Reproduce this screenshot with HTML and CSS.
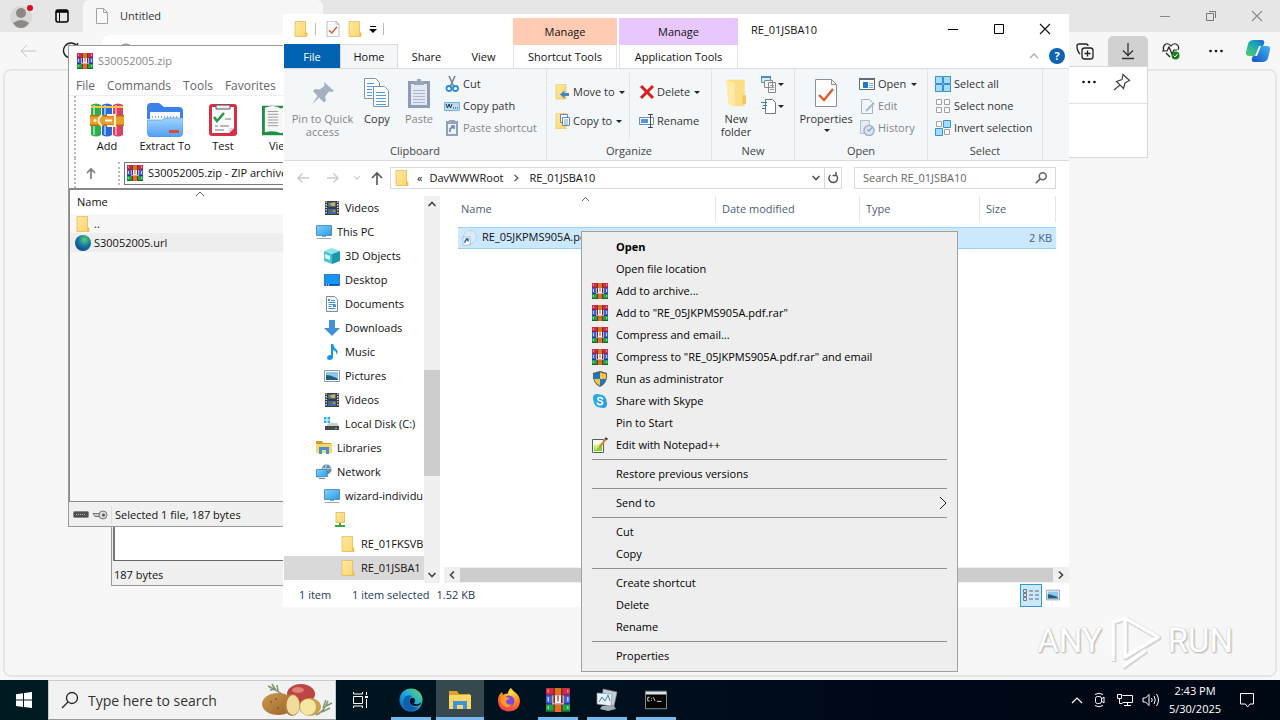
FILE: index.html
```html
<!DOCTYPE html>
<html lang="en">
<head>
<meta charset="utf-8">
<title>Desktop</title>
<link rel="stylesheet" href="styles.css">
</head>
<body>
<svg class="sprite" aria-hidden="true">
  <defs>
    <linearGradient id="gFolder" x1="0" y1="0" x2="1" y2="1"><stop offset="0" stop-color="#ffe9a0"/><stop offset="1" stop-color="#fbd56c"/></linearGradient>
    <linearGradient id="gScreen" x1="0" y1="0" x2="1" y2="1"><stop offset="0" stop-color="#7fd4fb"/><stop offset="1" stop-color="#2a9be8"/></linearGradient>
    <linearGradient id="gEdge" x1="0" y1="1" x2="1" y2="0"><stop offset="0" stop-color="#0c59a4"/><stop offset=".5" stop-color="#1ba7e0"/><stop offset="1" stop-color="#66dc5c"/></linearGradient>
    <radialGradient id="gFox" cx=".6" cy=".2" r=".9"><stop offset="0" stop-color="#ffe14a"/><stop offset=".5" stop-color="#ff8a1e"/><stop offset="1" stop-color="#f0255c"/></radialGradient>
    <radialGradient id="gGlobe" cx=".6" cy=".3" r=".8"><stop offset="0" stop-color="#5fd06a"/><stop offset=".5" stop-color="#1277a8"/><stop offset="1" stop-color="#0b3f80"/></radialGradient>
    <linearGradient id="gCop1" x1="0" y1="1" x2="1" y2="0"><stop offset="0" stop-color="#5ccf6a"/><stop offset=".6" stop-color="#1aa5b8"/><stop offset="1" stop-color="#1a66d8"/></linearGradient>
    <linearGradient id="gCop2" x1="0" y1="1" x2="1" y2="0"><stop offset="0" stop-color="#1450c8"/><stop offset="1" stop-color="#41b6f5"/></linearGradient>
    <linearGradient id="gBlueFolder" x1="0" y1="0" x2="0" y2="1"><stop offset="0" stop-color="#a3d4fc"/><stop offset="1" stop-color="#4e9ff2"/></linearGradient>
    <linearGradient id="gPotato" x1="0" y1="0" x2="1" y2="1"><stop offset="0" stop-color="#cf9a52"/><stop offset="1" stop-color="#96602a"/></linearGradient>
  </defs>
  <symbol id="folder" viewBox="0 0 16 16"><path d="M2 .5h10.500v11l1.500.5v3.500H2z" fill="url(#gFolder)" stroke="#e3b54a" stroke-width=".7"/><path d="M12 11.500l2 .5v3.500h-2z" fill="#f2c04c"/></symbol>
  <symbol id="rar" viewBox="0 0 16 16"><path fill="#cf2a48" d="M0 0h16v5H0z"/><path fill="#8f2458" d="M0 4h16v1H0z"/><path fill="#3c5ed8" d="M0 5h16v6H0z"/><path fill="#26379a" d="M0 10h16v1H0z"/><path fill="#1fa049" d="M0 11h16v5H0z"/><path fill="#0d6a2e" d="M0 15h16v1H0z"/><path fill="#f08a98" d="M1 1h1v2H1zM14 1h1v2h-1z"/><path fill="#c3cdfa" d="M1 6h1v3H1zM14 6h1v3h-1z"/><path fill="#7fdc8e" d="M1 12h1v2H1zM14 12h1v2h-1z"/><path fill="#dd6f28" d="M6 0h4v16H6z"/><path fill="#7b3410" d="M5 0h1v16H5zM10 0h1v16h-1z"/><path fill="#c9a9a0" d="M4 5h8v6H4z"/><path fill="#7c2c2c" d="M5 5h1v5H5zM10 5h1v5h-1z"/><path fill="#fff" d="M6 5h4v5H6z"/><path fill="#d04040" d="M7.500 5h1v4h-1z"/></symbol>
  <symbol id="books" viewBox="0 0 34 34"><path fill="#2fae4b" d="M1 2q5-3 10 0v30q-5 3-10 0z"/><path fill="#2b68d8" d="M12 2q5-3 10 0v30q-5 3-10 0z"/><path fill="#de3f68" d="M23 2q5-3 10 0v30q-5 3-10 0z"/><path fill="#8ce09b" d="M3 2h2v30H3z"/><path fill="#8db8ff" d="M14 2h2v30h-2z"/><path fill="#ff9db8" d="M25 2h2v30h-2z"/><path fill="#f6c83e" d="M1 3h32v2H1z"/><path fill="#eaa02a" d="M0 12h34v11H0z"/><path fill="#ba6c14" d="M0 12h34v1.500H0zM0 21.500h34V23H0z"/><path fill="none" stroke="#fff2cc" stroke-width="2" d="M12 12q-7 5.500 0 11M17 12h8v11h-8"/><path stroke="#fff" stroke-width="2" d="M15 17.500h7"/><circle cx="5" cy="17.500" r="1.500" fill="#fff2c0"/></symbol>
  <symbol id="extract" viewBox="0 0 36 34"><path fill="#3b82e8" d="M0 4q0-4 4-4h8l5 4h15q4 0 4 4v8H0z"/><path fill="#f5f9ff" d="M3 9h30v12H3z"/><path stroke="#9ab" stroke-width="2" d="M5 14h26" stroke-dasharray="1 2"/><path fill="url(#gBlueFolder)" stroke="#4992e6" stroke-width=".6" d="M0 17h15l4-2h17v14q0 5-5 5H5q-5 0-5-5z"/><path stroke="#e2483a" stroke-width="3" d="M22 28.500h10"/></symbol>
  <symbol id="test" viewBox="0 0 30 34"><rect x="1" y="1" width="28" height="32" rx="3" fill="#d92f45"/><path fill="#fbfbfb" d="M4 4h22v21l-5 5H4z"/><path fill="#ddd" d="M21 30v-5h5z"/><path fill="#eee" stroke="#555" d="M8 2h14v4H8z"/><path fill="none" stroke="#239a45" stroke-width="2.500" d="M6 14l3 4 7-8"/><path stroke="#777" d="M17 16h6M7 23h3M12 23h9M7 27h9" stroke-width="1.200"/></symbol>
  <symbol id="view" viewBox="0 0 40 34"><path fill="#1f8f45" d="M0 2h40v31H0z"/><path fill="#f7f7f7" d="M3 4q10-4 17 1v26q-8-4-17-1zM37 4q-10-4-17 1v26q8-4 17-1z"/><path stroke="#999" d="M6 8h11M6 11h11M6 14h11M6 17h11M6 20h11M6 23h11M23 8h11M23 11h11M23 14h11M23 17h11"/></symbol>
  <symbol id="page" viewBox="0 0 12 16"><path fill="#fafafa" stroke="#999" stroke-width=".9" d="M.5.500h7l4 4v11H.5zM7.500.500v4h4"/></symbol>
  <symbol id="doccheck" viewBox="0 0 22 28"><path fill="#fdfdfd" stroke="#8a9099" d="M.5.500h16l5 5v22H.5zM16.500.500v5h5"/><path fill="none" stroke="#df5a2c" stroke-width="2.400" d="M4 16l5 5 9-11"/></symbol>
  <symbol id="pin" viewBox="0 0 24 24"><path fill="#a3b0c2" d="M13 1l10 9-2 1-3-.5-4 5 1 4-2 2-5-5-7 7 5.500-8.500L2 10l2-2 4.500.500L13.500 5z"/></symbol>
  <symbol id="copyfile" viewBox="0 0 26 30"><g fill="#fff" stroke="#7d94b0"><path d="M.5.500h11l4 4v16H.5z"/><path d="M9.500 8.500h11l4 4v16h-15z"/></g><path stroke="#5699dc" stroke-width="1" d="M3 5.500h7M3 8.500h9M3 11.500h5M3 14.500h5M3 17.500h5M12 14.500h9M12 17.500h10M12 20.500h10M12 23.500h10M12 26.500h10"/></symbol>
  <symbol id="paste" viewBox="0 0 22 30"><path fill="#8d9db5" d="M0 3h22v27H0z"/><path fill="#e3e9f3" d="M3 6h16v21H3z"/><path fill="#98a5b8" d="M6 3h3V1h4v2h3v4H6z"/><path stroke="#a9b8d0" d="M5 12.500h12M5 15.500h12M5 18.500h12M5 21.500h12M5 24.500h12"/></symbol>
  <symbol id="cut" viewBox="0 0 16 16"><path stroke="#7b8794" stroke-width="1.600" d="M5 0l5 11M11 0L6 11" fill="none"/><g fill="none" stroke="#2f8bd0" stroke-width="1.800"><circle cx="5" cy="12.500" r="2.500"/><circle cx="11.500" cy="12.500" r="2.500"/></g></symbol>
  <symbol id="copypath" viewBox="0 0 16 16"><path fill="#b9dcf5" stroke="#79b3e0" d="M.5 4.500h15v8H.5z"/><path fill="none" stroke="#234" d="M2 6l1.500 4L5 6l1.500 4L8 6"/><path stroke="#234" stroke-dasharray="1 1" d="M9 10h5"/></symbol>
  <symbol id="pasteshort" viewBox="0 0 16 16"><path fill="#8fa1bb" d="M2 1h12v15H2z"/><path fill="#edf2f9" d="M4 4h8v10H4z"/><path fill="#98a5b8" d="M5 0h6v3H5z"/><path fill="none" stroke="#6e87ab" stroke-width="1.600" d="M6 12V9l4-3M7 6h3v3"/></symbol>
  <symbol id="moveto" viewBox="0 0 16 16"><path fill="url(#gFolder)" stroke="#e8bd55" stroke-width=".6" d="M1 0h10v15H1z"/><path fill="#3f83c4" d="M14 9H9.500V6.500L5 10.500l4.500 4V12H14z"/></symbol>
  <symbol id="copyto" viewBox="0 0 16 16"><path fill="url(#gFolder)" stroke="#e8bd55" stroke-width=".6" d="M1 0h10v16H1z"/><g fill="#fff" stroke="#6486b8"><path d="M5.500 1.500h7v8h-7z"/><path d="M7.500 4.500h7v8h-7z"/></g><path stroke="#6aa1dc" d="M9 7h4M9 9h4M9 11h4"/></symbol>
  <symbol id="delete" viewBox="0 0 16 16"><path stroke="#d4201f" stroke-width="3" d="M2 2l12 12M14 2L2 14"/></symbol>
  <symbol id="rename" viewBox="0 0 16 16"><path fill="#fff" stroke="#6d8bb0" d="M.5 4.500h14v7H.5z"/><path fill="#4e97d9" d="M2 6h7v4H2z"/><path fill="none" stroke="#444c58" d="M9 1.500h5M11.500 1.500v13M9 14.500h5"/></symbol>
  <symbol id="newfolder" viewBox="0 0 20 26"><path fill="#fbdd86" d="M1 1h17v24H9z"/><path fill="#ffeaa8" d="M1 1l8 3v22l-6-3z"/><path fill="#f1c65a" d="M16 15h3v8h-3z"/></symbol>
  <symbol id="newitem" viewBox="0 0 18 18"><path fill="#d9ecfa" stroke="#4d8fc4" d="M1.500 1.500h9v6h-9z"/><path fill="#4d8fc4" d="M1 1h10v2H1z"/><path fill="#f6f6f6" stroke="#888" d="M4.500 5.500h8v7h-8zM8.500 7.500h7v10h-7z"/><path stroke="#999" d="M10 10.500h4M10 12.500h4M10 14.500h4"/></symbol>
  <symbol id="easy" viewBox="0 0 18 18"><path fill="#fff" stroke="#777" d="M5.500 2.500h7l3 3v11h-10z"/><path stroke="#2c7fc8" stroke-width="1.200" d="M1 5.500h6M3 8.500h4M2 11.500h4"/></symbol>
  <symbol id="openwin" viewBox="0 0 16 16"><path fill="#fff" stroke="#5f6b7a" d="M.5 2.500h15v11H.5z"/><path fill="#5f6b7a" d="M0 2h16v2H0z"/><path fill="#1a7bd0" d="M4 6h5v6H4z"/><path stroke="#7ab0e0" d="M10 7.500h4M10 9.500h4M10 11.500h4"/></symbol>
  <symbol id="edit" viewBox="0 0 16 16"><path fill="#f2f5fa" stroke="#a9b4c8" d="M2.500 1.500h8l3 3v11h-11z"/><path stroke="#a9bad6" stroke-width="2.200" d="M15 5l-8 8"/></symbol>
  <symbol id="history" viewBox="0 0 16 16"><path fill="#e6eaf2" stroke="#b6bfce" d="M1.500.500h9v13h-9z"/><circle cx="10" cy="10.500" r="5" fill="#dfe6f1" stroke="#9fb0cc" stroke-width="1.500"/><path fill="none" stroke="#8fa3c4" stroke-width="1.300" d="M13 7.500l-3 3.500-2-1.500"/></symbol>
  <symbol id="selall" viewBox="0 0 16 16"><g fill="#a8dafc" stroke="#3391d6"><path d="M.5.500h7v7h-7zM8.500.500h7v7h-7zM.5 8.500h7v7h-7zM8.500 8.500h7v7h-7z"/></g></symbol>
  <symbol id="selnone" viewBox="0 0 16 16"><g fill="#fff" stroke="#a0a0a0"><path d="M1.500 1.500h5v5h-5zM9.500 1.500h5v5h-5zM1.500 9.500h5v5h-5zM9.500 9.500h5v5h-5z"/></g></symbol>
  <symbol id="selinv" viewBox="0 0 16 16"><g fill="#fff" stroke="#a0a0a0"><path d="M1.500 1.500h5v5h-5zM9.500 9.500h5v5h-5z"/></g><path fill="#a8dafc" stroke="#3391d6" d="M8.500.500h7v7h-7zM.5 8.500h7v7h-7z"/></symbol>
  <symbol id="videos" viewBox="0 0 16 16"><path fill="#3d3d40" d="M1 1h14v14H1z"/><path stroke="#f0f0f0" stroke-width="1.300" stroke-dasharray="1.300 1.300" d="M2.200 1.500v13M13.800 1.500v13"/><path fill="#4169a0" d="M4 2h8v5H4zM4 9h8v5H4z"/><path fill="#d9b43c" d="M5 4l3 2h3V2zM8 11l3-1v2z"/></symbol>
  <symbol id="pc" viewBox="0 0 16 16"><path fill="url(#gScreen)" stroke="#3d82b8" stroke-width=".8" d="M.5 1.500h15v10H.5z"/><path stroke="#8fa7ba" d="M6 12.500h4M1 14.500h14"/></symbol>
  <symbol id="cube" viewBox="0 0 16 16"><path fill="#8ee4ea" d="M0 3l8-3 8 3-8 3z"/><path fill="#4ac4d1" d="M0 3l8 3v10l-8-3z"/><path fill="#1b98ac" d="M16 3L8 6v10l8-3z"/><path fill="#d9fafa" d="M1 6l5 2v4l-5-2z"/></symbol>
  <symbol id="desktop" viewBox="0 0 16 16"><path fill="#1795f3" stroke="#1769b8" stroke-width=".8" d="M.5 2.500h15v11H.5z"/><path fill="#0b59a8" d="M1 12h14v1.500H1z"/><path stroke="#fff" stroke-dasharray="1 1" d="M2 12.800h4"/></symbol>
  <symbol id="docs" viewBox="0 0 16 16"><path fill="#fff" stroke="#7b8b9b" d="M2.500.500h8l3 3v12h-11z"/><path stroke="#3f94cf" d="M7 4.500h4M4.500 6.500h7M4.500 8.500h7M4.500 10.500h3M9 10.500h3M4.500 12.500h7"/><path fill="#3f94cf" d="M4 3h2v2H4zM9 9h3v2H9z"/></symbol>
  <symbol id="down" viewBox="0 0 16 16"><path fill="#4390d4" d="M5 0h6v8h5l-8 8-8-8h5z"/></symbol>
  <symbol id="music" viewBox="0 0 16 16"><path fill="#1795e8" d="M7 0h2q1 4 4 6 1.500 2-.5 5 .5-4-3.500-5v7q0 3-3.500 3Q3 16 3 14q0-3 4-3z"/></symbol>
  <symbol id="pics" viewBox="0 0 16 16"><path fill="#fff" stroke="#8b9aaa" d="M.5 2.500h15v11H.5z"/><path fill="#8ac8f4" d="M2 4h12v8H2z"/><path fill="#255d78" d="M2 7q5 0 12 4v1H2z"/></symbol>
  <symbol id="disk" viewBox="0 0 16 16"><path fill="#25b4ee" d="M0 1h2.500v2.500H0zM3.500 1H6v2.500H3.500zM0 4.500h2.500V7H0zM3.500 4.500H6V7H3.500z"/><path fill="#c8ccd0" d="M3 9l2-2h8l2 3v1H2z"/><path fill="#444a50" d="M1 10h14v4H1z"/><path fill="#3de05a" d="M11 12h2v1h-2z"/></symbol>
  <symbol id="libs" viewBox="0 0 16 16"><path fill="#d79b22" d="M0 1h6l1 2h8v4H0z"/><path fill="#fbd867" d="M0 4h16v9H0z"/><path fill="#3d92da" d="M3 7h10v7h-3v-4H6v4H3z"/></symbol>
  <symbol id="net" viewBox="0 0 16 16"><circle cx="10.500" cy="5.500" r="5" fill="#6790a8"/><path stroke="#c2dbe8" fill="none" d="M6 4q5 2 9 0M10.500 1q-3 4 0 8"/><path fill="url(#gScreen)" stroke="#2f83bd" stroke-width=".8" d="M.5 5.500h10l1 7-11 .5z"/><path stroke="#87a" d="M3 14.500h6"/></symbol>
  <symbol id="netfolder" viewBox="0 0 16 16"><path fill="url(#gFolder)" stroke="#d9ae46" stroke-width=".7" d="M4 .500h8.500v10H4z"/><path fill="#2faa3e" d="M7 11h2v2h4v2H3v-2h4z"/></symbol>
  <symbol id="shortcut" viewBox="0 0 16 16"><circle cx="9" cy="7" r="6.500" fill="#d8edfb" stroke="#b8d4ea"/><path fill="#fff" stroke="#8d9aa8" stroke-width=".6" d="M2 7h7v8H2z"/><path fill="none" stroke="#1d5fa8" stroke-width="1.300" d="M4 13v-2l3-2M4.500 9H7v2.500"/></symbol>
  <symbol id="shield" viewBox="0 0 16 16"><path fill="#4d5b66" d="M8 0l7 2q1 10-7 14Q0 12 1 2z"/><path fill="#1976c8" d="M8 1.500V8H2.200Q1.700 5 2 3zM8 8h5.800Q13 12 8 14.700z"/><path fill="#fdc437" d="M8 1.500V8h5.800q.5-3 .2-5zM8 8H2.200Q3 12 8 14.700z"/></symbol>
  <symbol id="skype" viewBox="0 0 16 16"><circle cx="8" cy="8" r="6.500" fill="#2aa9ea"/><circle cx="5" cy="5" r="4" fill="#2aa9ea"/><circle cx="11" cy="11" r="4" fill="#2a9be4"/><path fill="none" stroke="#fff" stroke-width="1.700" stroke-linecap="round" d="M10.500 5.800Q9.500 4.300 7.500 4.500 5.500 5 6 6.500 6.500 7.600 8.500 8q2.500.6 2 2.200-1 1.700-3 1.400-1.800-.3-2.200-1.600"/></symbol>
  <symbol id="npp" viewBox="0 0 16 16"><path fill="#f7f9ee" stroke="#4d6b43" d="M.5 2.500h11v13H.5z"/><path fill="#8bcf3c" d="M2 8h8v6H2z"/><path fill="#d6ee7c" d="M2 8l8-1-7 6z"/><path stroke="#555" stroke-dasharray="1 1" d="M2 2.500h9"/><path stroke="#d58b33" stroke-width="2" d="M14 2L7.500 10"/><path stroke="#333" stroke-width="2" d="M13 1l2.500 1.500"/></symbol>
  <symbol id="globe" viewBox="0 0 16 16"><circle cx="8" cy="8" r="8" fill="url(#gGlobe)"/></symbol>
  <symbol id="mag" viewBox="0 0 16 16"><circle cx="10" cy="6" r="4" fill="none" stroke="currentColor" stroke-width="1.800"/><path stroke="currentColor" stroke-width="2" d="M7 9l-5 5"/></symbol>
  <symbol id="left" viewBox="0 0 16 16"><path fill="none" stroke="currentColor" stroke-width="1.500" d="M14 8H3M7.500 3.500L3 8l4.500 4.500"/></symbol>
  <symbol id="x" viewBox="0 0 12 12"><path stroke="currentColor" stroke-width="1.100" d="M1 1l10 10M11 1L1 11"/></symbol>
  <symbol id="chev" viewBox="0 0 10 10"><path fill="none" stroke="currentColor" stroke-width="1.600" d="M1.500 3L5 6.500 8.500 3"/></symbol>
  <symbol id="dots" viewBox="0 0 16 16"><g fill="currentColor"><circle cx="2.500" cy="8" r="1.300"/><circle cx="8" cy="8" r="1.300"/><circle cx="13.500" cy="8" r="1.300"/></g></symbol>
  <symbol id="explorer" viewBox="0 0 24 24"><path fill="#e3a224" d="M1 3h8l2 3h11v4H1z"/><path fill="#fdd663" d="M1 7h22v14H1z"/><path fill="#3c96dd" d="M5 13h14v8h-4v-4H9v4H5z"/></symbol>
  <symbol id="edge" viewBox="0 0 24 24"><circle cx="12" cy="12" r="11.500" fill="url(#gEdge)"/><path fill="#0d5fb0" d="M5 10q3-4 8-2-4 2-2.500 7 2 5 9 4-3 4-8 4Q2 21 5 10z"/><path fill="#001521" d="M12 10q4-1 4 3-.5 2-1.500 2.500 4 2 8-1.500-1 4-5 4-7 0-7-5 0-2 1.500-3z"/></symbol>
  <symbol id="firefox" viewBox="0 0 24 24"><path fill="url(#gFox)" d="M14 0q2 3 5 5 4 3 4 9-1 9-11 9.500Q1 23 1 12q0-5 4-8l1 3q2-2 5-1.500Q11 2 14 0z"/><circle cx="12" cy="13" r="5.500" fill="#7a4ae0"/><path fill="#ff9a26" d="M4 10q5-3 9 1-4 0-4 3 1 4 6 2-3 5-8 2-4-3-3-8z"/></symbol>
  <symbol id="tasktool" viewBox="0 0 24 24"><path fill="#c4cdd4" stroke="#76838d" stroke-width=".7" d="M8 1l14 3-3 14-12-2z"/><path fill="#e9f1f7" stroke="#8795a0" stroke-width=".7" d="M2 5l15 1-1 12-14-2z"/><path fill="none" stroke="#3f84c0" d="M4 14l3-5 3 4 3-6 2 6"/><path fill="#9facb5" d="M7 18h12l2 3-8 2-8-2z"/></symbol>
  <symbol id="cmd" viewBox="0 0 24 20"><path fill="#050505" stroke="#969ca0" d="M.5.500h23v19H.5z"/><path fill="#e0e0e0" d="M1 1h22v3H1z"/><path fill="none" stroke="#e8e8e8" d="M5 7H3v4h2M7 8v1M7 10v1M9 7l2 4M13 11.500h5"/></symbol>
</svg>

<main class="desktop">
  <section class="edge" aria-label="Browser">
    <header class="edge-title">
      <button class="ebtn profile" aria-label="Profile"><svg width="28" height="28" viewBox="0 0 28 28"><circle cx="13" cy="15" r="11" fill="#d9d7d5"/><circle cx="13" cy="11" r="5" fill="#8b8886"/><path fill="#8b8886" d="M5 21q8-6 16 0-3 5-8 5t-8-5z"/><circle cx="22" cy="6" r="3" fill="#d40f1f"/></svg></button>
      <button class="ebtn" aria-label="Workspaces"><svg width="14" height="14" viewBox="0 0 14 14"><rect x="1" y="1" width="12" height="12" rx="2" fill="none" stroke="#000" stroke-width="1.500"/><path stroke="#000" stroke-width="2.500" d="M1 2.500h12"/><path stroke="#000" d="M4.500 2v11"/></svg></button>
      <div class="edge-tab"><svg width="12" height="16"><use href="#page"/></svg><span>Untitled</span></div>
      <div class="edge-controls">
        <button aria-label="Minimize"><svg width="10" height="10"><path stroke="#888" d="M0 5.500h10"/></svg></button>
        <button aria-label="Restore"><svg width="10" height="10" viewBox="0 0 10 10"><path fill="none" stroke="#777" d="M.5 2.500h7v7h-7zM3 .500h6.500V7"/></svg></button>
        <button aria-label="Close"><svg class="gray" width="12" height="12"><use href="#x"/></svg></button>
      </div>
    </header>
    <div class="edge-bar">
      <button class="ebtn back" aria-label="Back"><svg width="16" height="14" viewBox="0 0 16 14"><path fill="none" stroke="#c4c4c4" d="M16 7H1M7 1L1 7l6 6"/></svg></button>
      <button class="ebtn" aria-label="Refresh"><svg width="18" height="18" viewBox="0 0 18 18"><path fill="none" stroke="#222" stroke-width="1.400" d="M15 4a7.500 7.500 0 1 0 1.500 5M15.500 1v4h-4"/></svg></button>
      <div class="edge-address"><svg width="16" height="16" viewBox="0 0 16 16"><circle cx="8" cy="8" r="7" fill="none" stroke="#777"/></svg></div>
      <button class="ebtn" aria-label="Collections"><svg width="18" height="18" viewBox="0 0 18 18"><g fill="none" stroke="#222" stroke-width="1.300"><path d="M4 12Q1 9 1 4q0-2 2-2h7q2 0 2 2"/><rect x="6" y="6" width="11" height="11" rx="2.500"/><path d="M11.500 8.500v6M8.500 11.500h6"/></g></svg></button>
      <button class="ebtn active" aria-label="Downloads"><svg width="14" height="18" viewBox="0 0 14 18"><path fill="none" stroke="#333" stroke-width="1.300" d="M7 1v12M2 8.500l5 5 5-5M1 16.500h12"/></svg></button>
      <button class="ebtn" aria-label="Browser essentials"><svg width="18" height="18" viewBox="0 0 18 18"><path fill="none" stroke="#222" stroke-width="1.200" d="M2 9Q0 4 4 2q3-1 5 2 2-3 5-2 4 2 2 6M0 9h5l2-4 3 7 2-4h3M4 11l4 4"/><circle cx="13.500" cy="13.500" r="4" fill="#16801a"/><path fill="none" stroke="#fff" d="M11.500 13.500l1.500 1.500 2.500-3"/></svg></button>
      <button class="ebtn settings" aria-label="Settings"><svg width="16" height="16"><use href="#dots"/></svg></button>
      <button class="ebtn copilot" aria-label="Copilot"><svg width="24" height="24" viewBox="0 0 24 24"><path fill="url(#gCop1)" d="M8 1h8q3 0 2 4l-1 2h-4L9 17H3q-4 0-3-4l2-8q1-4 6-4z"/><path fill="url(#gCop2)" d="M16 23H8q-3 0-2-4l1-2h4l4-10h6q4 0 3 4l-2 8q-1 4-6 4z"/></svg></button>
    </div>
    <div class="edge-page"></div>
  </section>

  <aside class="flyout" aria-label="Downloads">
    <div class="flyout-head">
      <svg width="16" height="16"><use href="#dots"/></svg>
      <svg width="18" height="18" viewBox="0 0 18 18"><path fill="none" stroke="#444" stroke-width="1.200" d="M10 1.500l6.500 6-4.500 2.500-1.500 5.500-7-7L9 6.500zM7 12l-6 5"/></svg>
    </div>
  </aside>

  <section class="back-window" aria-label="Archive info">
    <div class="back-body"></div>
    <footer>187 bytes</footer>
  </section>

  <section class="winrar" aria-label="WinRAR">
    <header><svg width="16" height="16"><use href="#rar"/></svg><span>S30052005.zip</span></header>
    <nav><button>File</button><button>Commands</button><button>Tools</button><button>Favorites</button></nav>
    <div class="rar-tools">
      <button><svg width="34" height="34"><use href="#books"/></svg>Add</button>
      <button><svg width="36" height="34"><use href="#extract"/></svg>Extract To</button>
      <button><svg width="30" height="34"><use href="#test"/></svg>Test</button>
      <button><svg width="38" height="34"><use href="#view"/></svg>View</button>
    </div>
    <div class="rar-path">
      <button aria-label="Up"><svg width="12" height="12" viewBox="0 0 12 12"><path fill="none" stroke="#777" stroke-width="1.600" d="M6 12V2M2 6l4-4 4 4"/></svg></button>
      <div class="rar-grip"><div class="rar-address"><svg width="16" height="16"><use href="#rar"/></svg><span>S30052005.zip - ZIP archive, unpacked size 187 bytes</span></div></div>
    </div>
    <div class="rar-list">
      <div class="rar-head">Name<svg class="gray" width="10" height="10" viewBox="0 0 10 10"><path fill="none" stroke="#666" d="M1 7l4-4 4 4"/></svg></div>
      <div class="rar-row"><svg width="16" height="16"><use href="#folder"/></svg>..</div>
      <div class="rar-row selected"><svg width="16" height="16"><use href="#globe"/></svg>S30052005.url</div>
    </div>
    <footer>
      <svg width="16" height="10" viewBox="0 0 16 10"><rect x=".5" y="1.500" width="15" height="6" rx="1" fill="#4c5052" stroke="#888"/><path stroke="#bbb" stroke-dasharray="1 1" d="M3 4.500h10"/></svg>
      <svg width="16" height="12" viewBox="0 0 16 12"><path fill="#ccc" stroke="#777" d="M1 4.500h8v3H3z"/><circle cx="11" cy="6" r="4" fill="#ddd" stroke="#777"/><circle cx="11.500" cy="6" r="1.500" fill="#555"/></svg>
      <span>Selected 1 file, 187 bytes</span>
    </footer>
  </section>

  <section class="explorer" aria-label="File Explorer">
    <header class="ex-head">
      <div class="ex-left">
        <div class="qat">
          <svg width="16" height="16"><use href="#folder"/></svg><i></i>
          <svg width="16" height="16"><use href="#doccheck"/></svg>
          <svg width="16" height="16"><use href="#folder"/></svg>
          <svg width="8" height="8" viewBox="0 0 8 8"><path d="M1 1h6v1H1zM0 4h8L4 8z"/></svg><i></i>
        </div>
        <div class="tabs">
          <button class="tab file">File</button><button class="tab home">Home</button><button class="tab">Share</button><button class="tab">View</button>
        </div>
      </div>
      <div class="ctx shortcut"><span>Manage</span><button>Shortcut Tools</button></div>
      <div class="ctx app"><span>Manage</span><button>Application Tools</button></div>
      <div class="ex-right">
        <div class="ex-title">
          <h1>RE_01JSBA10</h1>
          <button aria-label="Minimize"><svg width="10" height="10"><path stroke="#000" d="M0 5.500h10"/></svg></button>
          <button aria-label="Maximize"><svg width="10" height="10"><path fill="none" stroke="#000" d="M.5.500h9v9h-9z"/></svg></button>
          <button aria-label="Close"><svg width="12" height="12"><use href="#x"/></svg></button>
        </div>
        <div class="ex-help">
          <svg width="10" height="10" viewBox="0 0 10 10"><path fill="none" stroke="#aaa" stroke-width="1.300" d="M1 7l4-4 4 4"/></svg>
          <button aria-label="Help">?</button>
        </div>
      </div>
    </header>

    <div class="ribbon">
      <div class="group clip">
        <div class="gbody">
          <button class="big wide dim"><svg width="24" height="32"><use href="#pin"/></svg>Pin to Quick<br>access</button>
          <button class="big"><svg width="26" height="32"><use href="#copyfile"/></svg>Copy</button>
          <button class="big dim"><svg width="22" height="32"><use href="#paste"/></svg>Paste</button>
          <div class="stack">
            <button><svg width="16" height="16"><use href="#cut"/></svg>Cut</button>
            <button><svg width="16" height="16"><use href="#copypath"/></svg>Copy path</button>
            <button class="dim"><svg width="16" height="16"><use href="#pasteshort"/></svg>Paste shortcut</button>
          </div>
        </div>
        <div class="glabel">Clipboard</div>
      </div>
      <div class="group organize">
        <div class="gbody">
          <div class="stack tall">
            <button><svg width="16" height="16"><use href="#moveto"/></svg>Move to<b class="caret"></b></button>
            <button><svg width="16" height="16"><use href="#copyto"/></svg>Copy to<b class="caret"></b></button>
          </div>
          <div class="stack tall divided">
            <button><svg width="16" height="16"><use href="#delete"/></svg>Delete<b class="caret"></b></button>
            <button><svg width="16" height="16"><use href="#rename"/></svg>Rename</button>
          </div>
        </div>
        <div class="glabel">Organize</div>
      </div>
      <div class="group new">
        <div class="gbody">
          <button class="big"><svg width="22" height="32"><use href="#newfolder"/></svg>New<br>folder</button>
          <div class="stack">
            <button aria-label="New item"><svg width="18" height="18"><use href="#newitem"/></svg><b class="caret"></b></button>
            <button aria-label="Easy access"><svg width="18" height="18"><use href="#easy"/></svg><b class="caret"></b></button>
          </div>
        </div>
        <div class="glabel">New</div>
      </div>
      <div class="group open">
        <div class="gbody">
          <button class="big"><svg width="22" height="32"><use href="#doccheck"/></svg>Properties<b class="caret"></b></button>
          <div class="stack">
            <button><svg width="16" height="16"><use href="#openwin"/></svg>Open<b class="caret"></b></button>
            <button class="dim"><svg width="16" height="16"><use href="#edit"/></svg>Edit</button>
            <button class="dim"><svg width="16" height="16"><use href="#history"/></svg>History</button>
          </div>
        </div>
        <div class="glabel">Open</div>
      </div>
      <div class="group select">
        <div class="gbody">
          <div class="stack">
            <button><svg width="16" height="16"><use href="#selall"/></svg>Select all</button>
            <button><svg width="16" height="16"><use href="#selnone"/></svg>Select none</button>
            <button><svg width="16" height="16"><use href="#selinv"/></svg>Invert selection</button>
          </div>
        </div>
        <div class="glabel">Select</div>
      </div>
    </div>

    <div class="navbar">
      <button class="faint" aria-label="Back"><svg width="16" height="16"><use href="#left"/></svg></button>
      <button class="faint flip" aria-label="Forward"><svg width="16" height="16"><use href="#left"/></svg></button>
      <button class="faint slim" aria-label="Recent"><svg width="8" height="8"><use href="#chev"/></svg></button>
      <button class="up" aria-label="Up"><svg width="14" height="14" viewBox="0 0 14 14"><path fill="none" stroke="#555" stroke-width="1.600" d="M7 14V2M2 7l5-5 5 5"/></svg></button>
      <div class="address">
        <svg width="16" height="16"><use href="#folder"/></svg>
        <span class="crumb">«</span><a href="#root">DavWWWRoot</a><svg class="sep" width="8" height="8" viewBox="0 0 8 8"><path fill="none" stroke="#555" stroke-width="1.200" d="M2.500 1L6 4 2.500 7"/></svg><a href="#here">RE_01JSBA10</a>
        <svg class="drop" width="10" height="10"><use href="#chev"/></svg>
        <button aria-label="Refresh"><svg width="12" height="12" viewBox="0 0 12 12"><path fill="none" stroke="#555" stroke-width="1.500" d="M9 3a4.300 4.300 0 1 1-5.500 0M9 0v3.500H5.500"/></svg></button>
      </div>
      <label class="search"><input type="text" placeholder="Search RE_01JSBA10" aria-label="Search RE_01JSBA10"><svg width="14" height="14"><use href="#mag"/></svg></label>
    </div>

    <div class="ex-body">
      <ul class="tree">
        <li class="l2"><svg width="16" height="16"><use href="#videos"/></svg>Videos</li>
        <li><svg width="16" height="16"><use href="#pc"/></svg>This PC</li>
        <li class="l2"><svg width="16" height="16"><use href="#cube"/></svg>3D Objects</li>
        <li class="l2"><svg width="16" height="16"><use href="#desktop"/></svg>Desktop</li>
        <li class="l2"><svg width="16" height="16"><use href="#docs"/></svg>Documents</li>
        <li class="l2"><svg width="16" height="16"><use href="#down"/></svg>Downloads</li>
        <li class="l2"><svg width="16" height="16"><use href="#music"/></svg>Music</li>
        <li class="l2"><svg width="16" height="16"><use href="#pics"/></svg>Pictures</li>
        <li class="l2"><svg width="16" height="16"><use href="#videos"/></svg>Videos</li>
        <li class="l2"><svg width="16" height="16"><use href="#disk"/></svg>Local Disk (C:)</li>
        <li><svg width="16" height="16"><use href="#libs"/></svg>Libraries</li>
        <li><svg width="16" height="16"><use href="#net"/></svg>Network</li>
        <li class="l2"><svg width="16" height="16"><use href="#pc"/></svg>wizard-individu</li>
        <li class="l3"><svg width="16" height="16"><use href="#netfolder"/></svg></li>
        <li class="l4"><svg width="16" height="16"><use href="#folder"/></svg>RE_01FKSVB</li>
        <li class="l4 selected"><svg width="16" height="16"><use href="#folder"/></svg>RE_01JSBA1</li>
      </ul>
      <div class="vscroll"><svg class="up" width="10" height="16"><use href="#chev"/></svg><div class="track"><div class="thumb"></div></div><svg width="10" height="16"><use href="#chev"/></svg></div>
      <div class="files">
        <table>
          <thead><tr><th class="c-name">Name<svg class="sort" width="9" height="6" viewBox="0 0 9 6"><path fill="none" stroke="#666" d="M1 5l3.500-3.500L8 5"/></svg></th><th class="c-date">Date modified</th><th class="c-type">Type</th><th class="c-size">Size</th></tr></thead>
          <tbody><tr><td><svg width="16" height="16"><use href="#shortcut"/></svg>RE_05JKPMS905A.pdf</td><td></td><td></td><td class="num">2 KB</td></tr></tbody>
        </table>
        <div class="hscroll"><svg class="lft" width="16" height="10"><use href="#chev"/></svg><div class="thumb"></div><svg class="rgt" width="16" height="10"><use href="#chev"/></svg></div>
      </div>
    </div>
    <footer class="status">
      <span class="count">1 item</span><span>1 item selected</span><span class="size">1.52 KB</span>
      <button class="on" aria-label="Details view"><svg width="16" height="14" viewBox="0 0 16 14"><path fill="none" stroke="#777" d="M.5 1.500h3v3h-3zM.5 5.500h3v3h-3zM.5 9.500h3v3h-3z"/><path stroke="#666" stroke-dasharray="4 2" d="M6 3h10M6 7h10M6 11h10"/></svg></button>
      <button aria-label="Thumbnail view"><svg width="14" height="14"><use href="#pics"/></svg></button>
    </footer>
  </section>

  <div class="watermark"><span>ANY</span><svg width="60" height="62" viewBox="0 0 60 62"><g fill="none" stroke="#d4d4d4" stroke-width="5" stroke-linejoin="round"><path d="M21 9v39l33-20z"/><path d="M21 9L9 13v39M18 58l24-17"/></g><g fill="none" stroke="#fff" stroke-width="3.500" stroke-linejoin="round"><path d="M20 8v39l33-20z"/><path d="M20 8L8 12v39M17 57l24-17"/></g></svg><span>RUN</span></div>

  <div class="menu" role="menu">
    <button role="menuitem" class="bold"><i></i>Open</button>
    <button role="menuitem"><i></i>Open file location</button>
    <button role="menuitem"><svg width="16" height="16"><use href="#rar"/></svg>Add to archive...</button>
    <button role="menuitem"><svg width="16" height="16"><use href="#rar"/></svg>Add to "RE_05JKPMS905A.pdf.rar"</button>
    <button role="menuitem"><svg width="16" height="16"><use href="#rar"/></svg>Compress and email...</button>
    <button role="menuitem"><svg width="16" height="16"><use href="#rar"/></svg>Compress to "RE_05JKPMS905A.pdf.rar" and email</button>
    <button role="menuitem"><svg width="16" height="16"><use href="#shield"/></svg>Run as administrator</button>
    <button role="menuitem"><svg width="16" height="16"><use href="#skype"/></svg>Share with Skype</button>
    <button role="menuitem"><i></i>Pin to Start</button>
    <button role="menuitem"><svg width="16" height="16"><use href="#npp"/></svg>Edit with Notepad++</button>
    <hr>
    <button role="menuitem"><i></i>Restore previous versions</button>
    <hr>
    <button role="menuitem"><i></i>Send to<svg class="more" width="8" height="14" viewBox="0 0 8 14"><path fill="none" stroke="#222" d="M1 1l6 6-6 6"/></svg></button>
    <hr>
    <button role="menuitem"><i></i>Cut</button>
    <button role="menuitem"><i></i>Copy</button>
    <hr>
    <button role="menuitem"><i></i>Create shortcut</button>
    <button role="menuitem"><i></i>Delete</button>
    <button role="menuitem"><i></i>Rename</button>
    <hr>
    <button role="menuitem"><i></i>Properties</button>
  </div>
</main>

<footer class="taskbar">
  <button class="start" aria-label="Start"><svg width="16" height="16" viewBox="0 0 16 16"><path fill="#fff" d="M0 2.200l7-1V7.600H0zM8 1l8-1v7.600H8zM0 8.500h7v6.400l-7-1zM8 8.500h8V16l-8-1.100z"/></svg></button>
  <label class="tb-search">
    <svg width="18" height="18" viewBox="0 0 18 18"><circle cx="11" cy="7" r="5.500" fill="none" stroke="#222" stroke-width="1.300"/><path stroke="#222" stroke-width="1.300" d="M7 11l-6 6"/></svg>
    <input type="text" placeholder="Type here to search" aria-label="Type here to search">
    <svg width="72" height="36" viewBox="0 0 72 36"><path fill="none" stroke="#7f9474" stroke-width="1.500" d="M6 4q8 4 14 8M8 8l6-1M10 2l3 5M15 3l1 6M54 33q8-3 12-14M60 30l8-4M61 26l3-8M64 24l6-3"/><ellipse cx="39" cy="12" rx="14" ry="10" fill="#bd4544"/><ellipse cx="36" cy="8" rx="6" ry="3" fill="#dc8078"/><ellipse cx="16" cy="22" rx="16" ry="11" fill="url(#gPotato)"/><g fill="#8a5826"><circle cx="9" cy="20" r="1"/><circle cx="16" cy="26" r="1"/><circle cx="14" cy="17" r="1"/></g><ellipse cx="30" cy="23" rx="8" ry="11" fill="#b07a3c"/><ellipse cx="31" cy="23" rx="6.500" ry="10" fill="#f2dc9c"/><ellipse cx="48" cy="25" rx="11" ry="9" fill="#c9a24d"/><ellipse cx="46" cy="25" rx="8" ry="8" fill="#f6e6a4"/></svg>
  </label>
  <div class="apps">
    <button class="taskview" aria-label="Task View"><svg width="18" height="18" viewBox="0 0 18 18"><path fill="none" stroke="#fff" d="M1.500 5.500h9v7h-9zM1.500 1v2h9V1M1.500 17v-2h9v2M14.500 1v3M14.500 8v9"/><path stroke="#fff" stroke-width="2" d="M13 6h3"/></svg></button>
    <button class="run" aria-label="Microsoft Edge"><svg width="24" height="24"><use href="#edge"/></svg></button>
    <button class="run current" aria-label="File Explorer"><svg width="24" height="24"><use href="#explorer"/></svg></button>
    <button aria-label="Firefox"><svg width="24" height="24"><use href="#firefox"/></svg></button>
    <button class="run" aria-label="WinRAR"><svg width="24" height="24"><use href="#rar"/></svg></button>
    <button class="run" aria-label="System tool"><svg width="24" height="24"><use href="#tasktool"/></svg></button>
    <button class="run" aria-label="Command Prompt"><svg width="22" height="20"><use href="#cmd"/></svg></button>
  </div>
  <div class="tray">
    <svg width="12" height="12" viewBox="0 0 12 12"><path fill="none" stroke="#fff" stroke-width="1.200" d="M1 9l5-5 5 5"/></svg>
    <svg width="16" height="16" viewBox="0 0 16 16"><g fill="none" stroke="#fff"><rect x="3.500" y="4.500" width="6" height="7" rx="2"/><path d="M9.500 7l2.500-2v6L9.500 9M3 2.500q4-2.500 8 0M3 13.500q4 2.500 8 0"/></g></svg>
    <svg width="16" height="16" viewBox="0 0 16 16"><path fill="none" stroke="#fff" d="M5.500 3.500h10v7h-10M10.500 10.500v3M7 13.500h7M.5 2.500h4v4h-4zM2.500 6.500v5h3"/></svg>
    <svg width="18" height="16" viewBox="0 0 18 16"><path fill="none" stroke="#fff" d="M1 6h2.500L7 2.500v11L3.500 10H1zM9.500 6q1.500 2 0 4M12 4q2.500 4 0 8M14.500 2q4 6 0 12"/></svg>
  </div>
  <div class="clock"><time>2:43 PM</time><time>5/30/2025</time></div>
  <button class="notify" aria-label="Notifications"><svg width="16" height="16" viewBox="0 0 16 16"><path fill="none" stroke="#fff" d="M1.500 1.500h13v10.500H11L8.500 15 6.500 12h-5z"/></svg></button>
</footer>
</body>
</html>
```

FILE: styles.css
```css
* { box-sizing: border-box; }
body {
  margin: 0;
  height: 100vh;
  display: flex;
  flex-direction: column;
  overflow: hidden;
  font: 11px/14px "Open Sans", "Noto Sans", sans-serif;
  color: #111;
}
button {
  font: inherit;
  color: inherit;
  background: none;
  border: 0;
  padding: 0;
  margin: 0;
  display: flex;
  align-items: center;
  justify-content: center;
  white-space: nowrap;
}
input { font: inherit; color: inherit; border: 0; background: none; padding: 0; outline: 0; min-width: 0; }
input::placeholder { color: inherit; opacity: 1; }
svg { flex: none; display: block; }
a { color: inherit; text-decoration: none; }
.sprite { position: absolute; width: 0; height: 0; }
.gray { color: #888; }
.desktop { flex: 1; position: relative; min-height: 0; overflow: hidden; background: #f7f7f7; }

/* Browser */
.edge { height: 100%; display: flex; flex-direction: column; background: #f7f7f7; }
.edge-title { height: 32px; display: flex; background: #e6e6e6; }
.edge-title > .ebtn { width: 35px; }
.edge-title > .profile { width: 44px; }
.edge-tab { width: 240px; margin-left: 4px; padding-left: 13px; display: flex; align-items: center; gap: 12px; background: #f7f7f7; border-radius: 6px 6px 0 0; color: #333; }
.edge-controls { margin-left: auto; display: flex; }
.edge-controls button { width: 46px; }
.edge-bar { height: 37px; display: flex; align-items: center; padding-left: 8px; }
.edge-bar .ebtn { width: 46px; height: 30px; }
.edge-bar .back { width: 40px; }
.edge-bar .settings { width: 44px; }
.edge-bar .copilot { width: 42px; padding-right: 2px; }
.edge-bar .active { width: 40px; background: #d1d1d1; border-radius: 5px 5px 0 0; }
.edge-address { flex: 1; height: 32px; margin-left: 8px; padding-left: 16px; display: flex; align-items: center; background: #fff; border-radius: 8px; }
.edge-page { flex: 1; margin: 0 3px 3px; border: 2px solid #e6e6e6; border-radius: 8px; background: #f7f7f7; }

.flyout { position: absolute; top: 66px; right: 132px; width: 320px; height: 92px; background: #fff; border: 1px solid #d8d8d8; }
.flyout-head { height: 37px; display: flex; align-items: center; justify-content: flex-end; gap: 16px; padding: 0 16px 6px; border-bottom: 1px solid #e2e2e2; }

/* Rear window */
.back-window { position: absolute; left: 111px; top: 100px; width: 300px; height: 486px; display: flex; flex-direction: column; background: #f0f0f0; border: 1px solid #999; }
.back-body { flex: 1; margin-left: 1px; background: #fff; border-left: 2px solid #777; border-bottom: 1px solid #666; }
.back-window footer { height: 24px; padding: 7px 2px 0; }

/* WinRAR */
.winrar { position: absolute; left: 68px; top: 45px; width: 420px; height: 482px; display: flex; flex-direction: column; background: #fff; border: 1px solid #999; }
.winrar header { height: 29px; display: flex; align-items: center; gap: 5px; padding-left: 8px; color: #888; }
.winrar nav { height: 21px; display: flex; gap: 12px; padding: 2px 0 0 7px; color: #666; font-size: 12px; border-bottom: 1px solid #eee; }
.rar-tools { height: 62px; display: flex; margin-left: 5px; padding: 2px 0 0 2px; border-left: 2px dotted #bbb; }
.rar-tools button { width: 58px; flex-direction: column; gap: 2px; }
.rar-path { height: 30px; display: flex; align-items: center; margin-left: 5px; border-left: 2px dotted #bbb; }
.rar-path button { width: 30px; }
.rar-grip { flex: 1; margin-left: 12px; padding-left: 4px; border-left: 2px dotted #bbb; overflow: hidden; }
.rar-address { height: 23px; display: flex; align-items: center; gap: 5px; padding-left: 2px; border: 1px solid #777; white-space: nowrap; }
.rar-list { flex: 1; background: #f7f7f7; border: 1px solid #888; border-width: 2px 1px 1px; }
.rar-head { height: 24px; display: flex; padding: 5px 7px; gap: 87px; background: #fff; }
.rar-head svg { margin-top: -6px; }
.rar-row { height: 19px; display: flex; align-items: center; gap: 3px; padding-left: 5px; }
.rar-row.selected { background: #eee; }
.winrar footer { height: 24px; display: flex; align-items: center; gap: 3px; padding: 2px 0 0 4px; background: #f0f0f0; }
.winrar footer span { padding: 2px 3px; border-left: 1px solid #ddd; }

/* Explorer */
.explorer { position: absolute; left: 283px; top: 14px; width: 786px; height: 593px; display: flex; flex-direction: column; background: #fff; padding-left: 1px; }
.ex-head { display: flex; gap: 2px; height: 55px; border-bottom: 1px solid #dadbdc; }
.ex-left { width: 227px; display: flex; flex-direction: column; }
.qat { height: 31px; display: flex; align-items: center; gap: 6px; padding-left: 9px; }
.qat i { width: 1px; height: 12px; background: #bbb; margin: 0 3px 0 0; }
.tabs { flex: 1; display: flex; }
.tab { flex: none; padding: 1px 0 0; width: 57px; height: 24px; }
.tab.file { width: 56px; background: #0063b1; color: #fff; }
.tab.home { width: 58px; background: #f5f6f7; border: 1px solid #dadbdc; border-bottom: 0; }
.ctx { width: 104px; padding-top: 4px; text-align: center; display: flex; flex-direction: column; }
.ctx.app { width: 119px; }
.ctx span { height: 27px; line-height: 28px; background: #ffccb3; }
.ctx.app span { background: #e8c8fc; }
.ctx button { flex: 1; border: 1px solid #e4e4e4; border-width: 0 1px; }
.ex-right { flex: 1; display: flex; flex-direction: column; }
.ex-title { height: 31px; display: flex; padding-right: 1px; }
.ex-title h1 { flex: 1; margin: 0; padding-left: 11px; font-size: 11px; font-weight: 400; line-height: 31px; }
.ex-title button { width: 46px; padding-bottom: 2px; }
.ex-help { flex: 1; display: flex; align-items: center; justify-content: flex-end; gap: 10px; padding: 0 4px 2px 0; }
.ex-help button { width: 16px; height: 16px; border-radius: 50%; background: #0e62b4; color: #fff; font-weight: 700; }

.ribbon { height: 92px; display: flex; background: #f4f7f9; border-bottom: 1px solid #dadbdc; color: #333; }
.group { display: flex; flex-direction: column; border-right: 1px solid #e2e3e4; }
.clip { width: 263px; }
.organize { width: 165px; }
.new { width: 83px; }
.open { width: 133px; }
.select { width: 115px; }
.gbody { flex: 1; display: flex; padding-top: 4px; }
.glabel { height: 18px; line-height: 18px; text-align: center; color: #444; }
.big { flex-direction: column; justify-content: flex-start; padding-top: 4px; width: 42px; line-height: 13px; white-space: normal; }
.big svg { margin-bottom: 3px; }
.big.wide { flex: 1; padding-left: 5px; white-space: nowrap; }
.big .caret { margin-top: 4px; }
.dim { color: #858585; }
.stack { display: flex; flex-direction: column; }
.stack button { height: 22px; gap: 3px; justify-content: flex-start; }
.clip .stack { width: 102px; margin-left: 4px; }
.stack.tall { padding-top: 8px; gap: 7px; padding-left: 8px; width: 84px; height: 66px; }
.stack.tall button { gap: 2px; }
.stack.divided { border-left: 1px solid #e2e3e4; padding-left: 9px; }
.new .big { width: 48px; }
.new .stack { width: 34px; }
.new .stack button { gap: 0; }
.open .big { width: 62px; }
.open .stack { margin-left: 2px; }
.select .stack { margin-left: 7px; }
.caret { width: 0; height: 0; margin-left: 2px; border: 3px solid transparent; border-top-color: #222; border-bottom: 0; }
.new .caret { margin-left: 0; }

.navbar { height: 35px; display: flex; align-items: center; padding: 0 13px 2px 4px; }
.navbar > button { width: 30px; color: #555; }
.navbar > .slim { width: 18px; }
.navbar > .up { width: 22px; }
.navbar > .faint { color: #ccc; }
.flip svg { transform: scaleX(-1); }
.address { flex: 1; height: 22px; margin-left: 2px; display: flex; align-items: center; gap: 7px; padding-left: 3px; border: 1px solid #d9d9d9; }
.address .drop { margin-left: auto; color: #555; }
.address .sep { margin: 0 2px; }
.address button { width: 17px; height: 20px; border-left: 1px solid #d9d9d9; margin-left: -4px; }
.search { width: 202px; height: 22px; margin-left: 12px; display: flex; align-items: center; padding: 0 7px 0 8px; border: 1px solid #d9d9d9; color: #666; }
.search input { flex: 1; }

.ex-body { flex: 1; display: flex; min-height: 0; }
.tree { width: 140px; margin: 0; padding: 0; list-style: none; overflow: hidden; }
.tree li { height: 24px; display: flex; align-items: center; gap: 5px; padding-left: 32px; white-space: nowrap; }
.tree .l2 { padding-left: 40px; }
.tree .l3 { padding-left: 48px; }
.tree .l4 { padding-left: 56px; }
.tree .selected { background: #d9d9d9; }
.vscroll { width: 16px; display: flex; flex-direction: column; align-items: center; background: #f0f0f0; color: #444; }
.vscroll .up { transform: rotate(180deg); }
.track { flex: 1; align-self: stretch; padding-top: 158px; }
.track .thumb { height: 106px; background: #cdcdcd; }
.files { flex: 1; display: flex; flex-direction: column; margin-left: 4px; }
.files table { flex: none; margin: 0 auto 0 14px; width: 598px; table-layout: fixed; border-collapse: separate; border-spacing: 0; display: table; }
.files thead th { height: 26px; padding: 0 0 0 6px; font-weight: 400; text-align: left; color: #4c607a; border-right: 1px solid #e5e5e5; position: relative; }
.files thead .c-name { width: 258px; padding-left: 3px; }
.c-date { width: 144px; }
.c-type { width: 120px; }
.sort { position: absolute; left: 123px; top: 0; }
.files tbody::before { content: ""; display: block; height: 5px; }
.files td { height: 22px; padding: 0 4px 0 3px; background: #cce8ff; border: 1px solid #99d1ff; border-width: 1px 0; white-space: nowrap; }
.files td:first-child svg { display: inline-block; vertical-align: middle; margin-right: 5px; }
.num { text-align: right; color: #4c607a; }
.hscroll { height: 16px; margin-top: auto; display: flex; align-items: center; background: #f0f0f0; color: #444; }
.hscroll .thumb { flex: 1; height: 14px; background: #cdcdcd; }
.hscroll .lft { transform: rotate(90deg); }
.hscroll .rgt { transform: rotate(-90deg); }
.status { height: 24px; display: flex; align-items: center; padding: 0 5px 0 15px; color: #1e395b; }
.status .count { width: 53px; }
.status .size { margin: 0 auto 0 7px; }
.status button { width: 22px; height: 23px; }
.status .on { background: #cce8ff; border: 1px solid #3399d0; }

/* Context menu */
.menu { position: absolute; left: 581px; top: 231px; width: 377px; padding: 4px 10px; background: #eee; border: 1px solid #a0a0a0; color: #000; }
.menu button { width: 100%; height: 22px; justify-content: flex-start; gap: 8px; }
.menu i { width: 16px; }
.menu hr { height: 1px; margin: 3px 0; border: 0; background: #919191; }
.menu .bold { font-weight: 700; }
.menu .more { margin-left: auto; }

.watermark { position: absolute; right: 47px; bottom: 8px; display: flex; align-items: center; gap: 3px; font: 33px/40px "Liberation Sans Narrow", "Roboto", sans-serif; color: #fff; text-shadow: 1px 1px 2px #aaa, 0 0 2px #ccc; }

/* Taskbar */
.taskbar { height: 40px; display: flex; background: linear-gradient(90deg, #001a22, #00121f 40%, #000818 70%, #000814); color: #fff; }
.start { width: 48px; }
.tb-search { width: 288px; display: flex; align-items: center; gap: 9px; padding: 0 1px 0 12px; background: #f2f2f2; border: 1px solid #c8c8c8; border-bottom-color: #999; color: #333; font-size: 14px; }
.tb-search input { flex: 1; }
.apps { display: flex; gap: 1px; }
.apps button { width: 48px; border-top: 3px solid transparent; border-bottom: 3px solid transparent; }
.apps .taskview { width: 50px; }
.apps .run { border-image: linear-gradient(90deg, transparent 4px, #76b9ed 4px, #76b9ed 44px, transparent 44px) 0 0 3 0; border-bottom: 3px solid; }
.apps .current { background: #38484f; border-image: none; border-bottom-color: #76b9ed; }
.tray { margin-left: auto; display: flex; align-items: center; gap: 9px; }
.clock { width: 70px; display: flex; flex-direction: column; justify-content: center; align-items: center; line-height: 18px; }
.notify { width: 34px; margin-right: 16px; }
```
